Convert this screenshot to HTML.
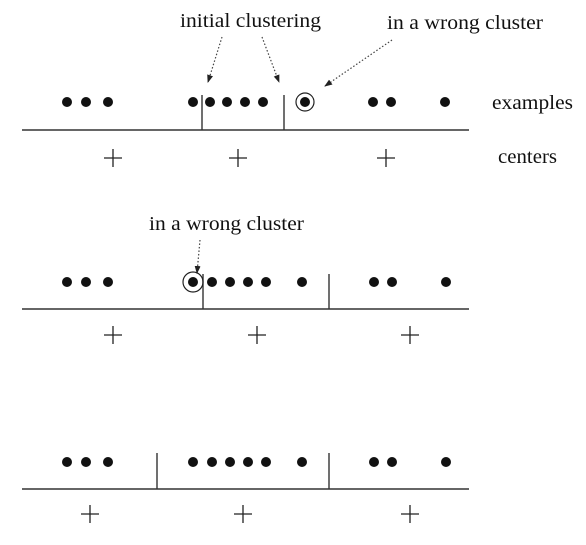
<!DOCTYPE html>
<html><head><meta charset="utf-8"><style>html,body{margin:0;padding:0;background:#fff;}svg{display:block}</style></head>
<body>
<svg width="586" height="545" viewBox="0 0 586 545" xmlns="http://www.w3.org/2000/svg" font-family="'Liberation Serif', serif" font-size="20" fill="#111">
<defs>
<marker id="ah" markerWidth="8" markerHeight="8" refX="7" refY="4" orient="auto" markerUnits="userSpaceOnUse"><path d="M0,1 L8,4 L0,7 z" fill="#222"/></marker>
<g id="p"><path d="M-9,0H9M0,-9V9" stroke="#222" stroke-width="1.3"/></g>
</defs>
<g stroke="#333" stroke-width="1.4" fill="none">
<line x1="22" y1="130" x2="469" y2="130"/>
<line x1="202" y1="95" x2="202" y2="130"/>
<line x1="284" y1="95" x2="284" y2="130"/>
<line x1="22" y1="309" x2="469" y2="309"/>
<line x1="203" y1="274" x2="203" y2="309"/>
<line x1="329" y1="274" x2="329" y2="309"/>
<line x1="22" y1="489" x2="469" y2="489"/>
<line x1="157" y1="453" x2="157" y2="489"/>
<line x1="329" y1="453" x2="329" y2="489"/>
<circle cx="305" cy="102" r="9" stroke="#222" stroke-width="1.2"/>
<circle cx="193" cy="282" r="10" stroke="#222" stroke-width="1.2"/>
</g>
<g stroke="#444" stroke-width="1.2" stroke-dasharray="1.5,2" fill="none">
<line x1="222" y1="37" x2="208" y2="82" marker-end="url(#ah)"/>
<line x1="262" y1="37" x2="279" y2="82" marker-end="url(#ah)"/>
<line x1="392" y1="40" x2="325" y2="86" marker-end="url(#ah)"/>
<line x1="200" y1="240" x2="197" y2="273" marker-end="url(#ah)"/>
</g>
<g fill="#111">
<circle cx="67" cy="102" r="5"/><circle cx="86" cy="102" r="5"/><circle cx="108" cy="102" r="5"/>
<circle cx="193" cy="102" r="5"/><circle cx="210" cy="102" r="5"/><circle cx="227" cy="102" r="5"/><circle cx="245" cy="102" r="5"/><circle cx="263" cy="102" r="5"/>
<circle cx="305" cy="102" r="5"/><circle cx="373" cy="102" r="5"/><circle cx="391" cy="102" r="5"/><circle cx="445" cy="102" r="5"/>

<circle cx="67" cy="282" r="5"/><circle cx="86" cy="282" r="5"/><circle cx="108" cy="282" r="5"/>
<circle cx="193" cy="282" r="5"/><circle cx="212" cy="282" r="5"/><circle cx="230" cy="282" r="5"/><circle cx="248" cy="282" r="5"/><circle cx="266" cy="282" r="5"/>
<circle cx="302" cy="282" r="5"/><circle cx="374" cy="282" r="5"/><circle cx="392" cy="282" r="5"/><circle cx="446" cy="282" r="5"/>

<circle cx="67" cy="462" r="5"/><circle cx="86" cy="462" r="5"/><circle cx="108" cy="462" r="5"/>
<circle cx="193" cy="462" r="5"/><circle cx="212" cy="462" r="5"/><circle cx="230" cy="462" r="5"/><circle cx="248" cy="462" r="5"/><circle cx="266" cy="462" r="5"/>
<circle cx="302" cy="462" r="5"/><circle cx="374" cy="462" r="5"/><circle cx="392" cy="462" r="5"/><circle cx="446" cy="462" r="5"/>
</g>
<use href="#p" x="113" y="158"/><use href="#p" x="238" y="158"/><use href="#p" x="386" y="158"/>
<use href="#p" x="113" y="335"/><use href="#p" x="257" y="335"/><use href="#p" x="410" y="335"/>
<use href="#p" x="90" y="514"/><use href="#p" x="243" y="514"/><use href="#p" x="410" y="514"/>
<text x="180" y="27" textLength="141" lengthAdjust="spacingAndGlyphs">initial clustering</text>
<text x="387" y="29" textLength="156" lengthAdjust="spacingAndGlyphs">in a wrong cluster</text>
<text x="492" y="109" textLength="81" lengthAdjust="spacingAndGlyphs">examples</text>
<text x="498" y="163" textLength="59" lengthAdjust="spacingAndGlyphs">centers</text>
<text x="149" y="230" textLength="155" lengthAdjust="spacingAndGlyphs">in a wrong cluster</text>
</svg>
</body></html>
